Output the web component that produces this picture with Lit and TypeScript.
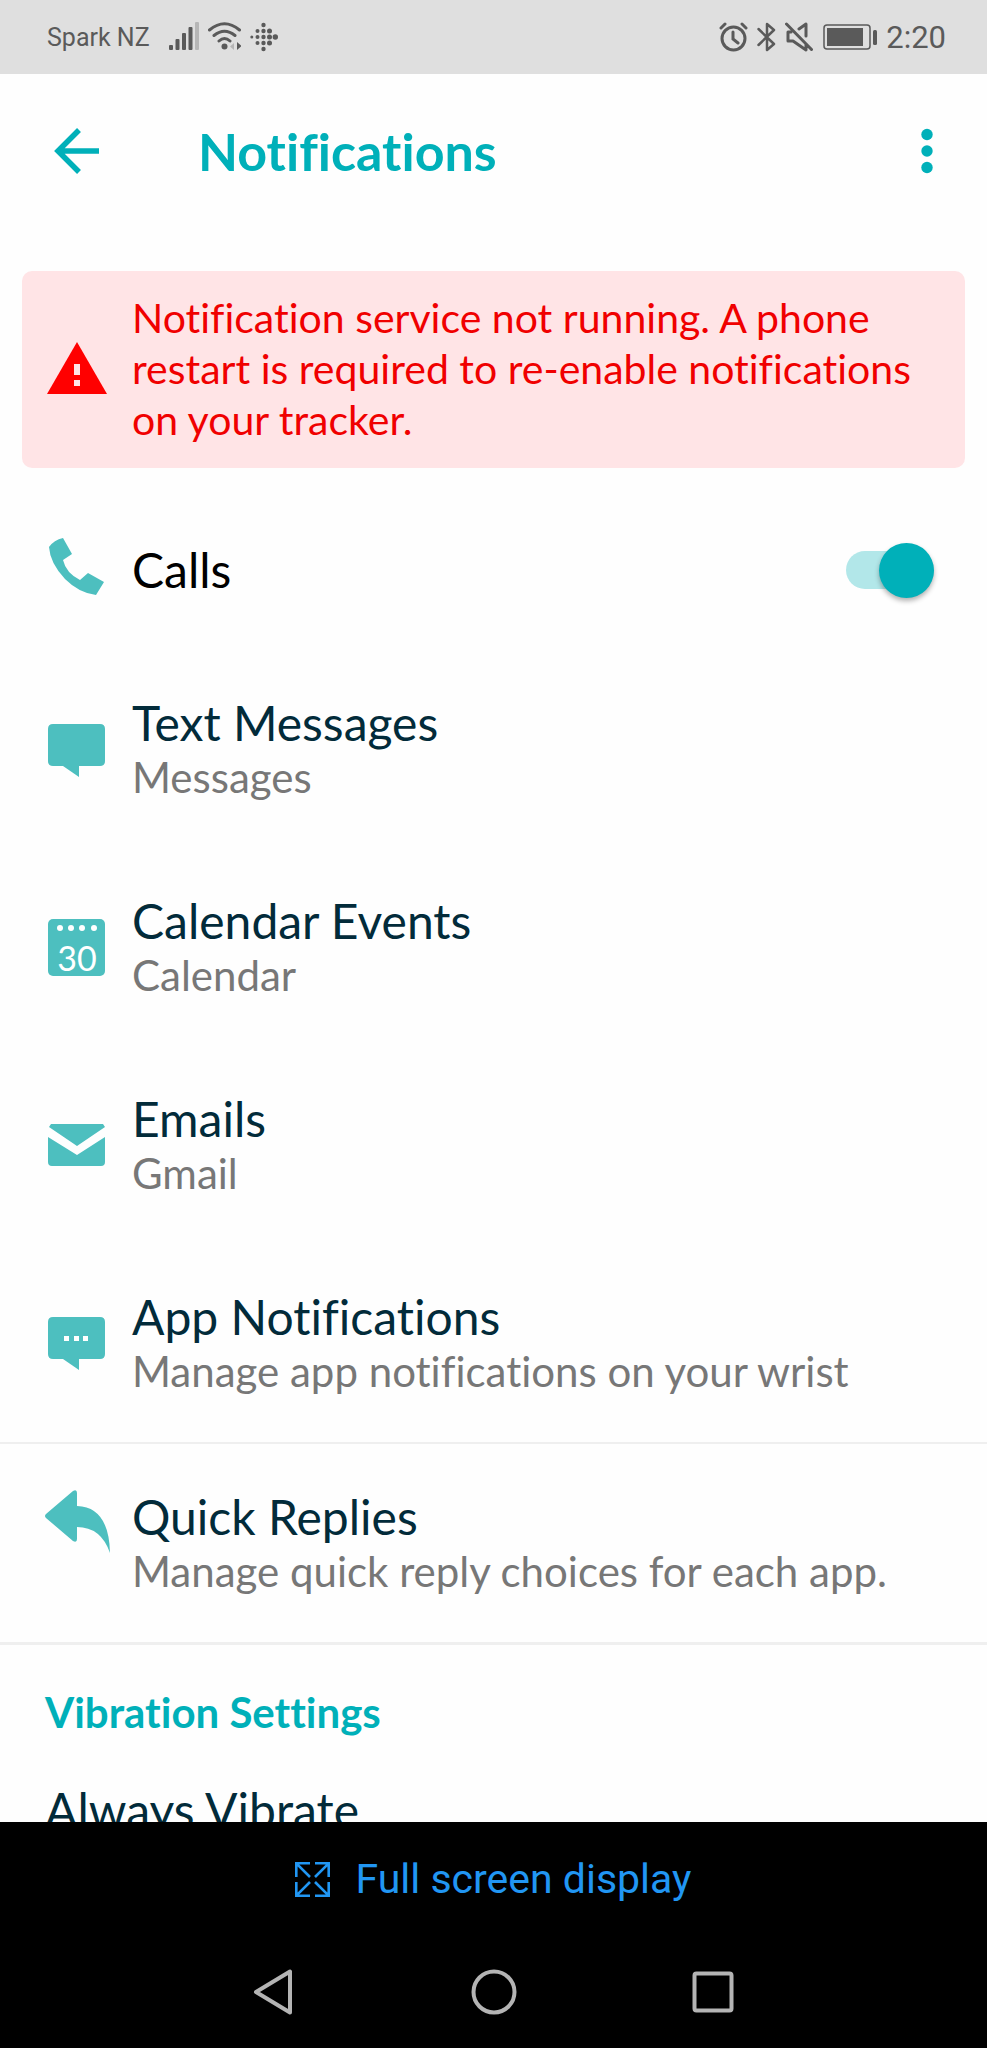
import { LitElement, html, css, svg } from "lit";
import { customElement, state } from "lit/decorators.js";

const icons = {
  phone: svg`<path d="M8 13Q13 6 22 4L31 20L22 26Q25 39 39 46L47 39L63 48L55 61Q38 59 24 45Q9 29 8 13Z" fill="#4dbfbf"/>`,
  message: svg`<path d="M12 11H59Q64 11 64 16V48Q64 53 59 53H38V64L22 53H12Q7 53 7 48V16Q7 11 12 11Z" fill="#4dbfbf"/>`,
  calendar: svg`<rect x="7" y="8" width="57" height="57" rx="5" fill="#4dbfbf"/>
    <g fill="#fff"><circle cx="19" cy="17" r="3"/><circle cx="30" cy="17" r="3"/><circle cx="41" cy="17" r="3"/><circle cx="53" cy="17" r="3"/></g>
    <text x="36" y="60" text-anchor="middle" font-family="Lato, sans-serif" font-size="34" fill="#fff">30</text>`,
  mail: svg`<path d="M10 15H62L64 18L36 37L8 18Z M7 28L36 46L64 28V53Q64 57 60 57H11Q7 57 7 53Z" fill="#4dbfbf"/>`,
  chat: svg`<path d="M12 10H59Q64 10 64 15V47Q64 52 59 52H38V63L22 52H12Q7 52 7 47V15Q7 10 12 10Z" fill="#4dbfbf"/>
    <path d="M23 29h5v5h-5zM33 29h5v5h-5zM42 29h5v5h-5z" fill="#fff"/>`,
  reply: svg`<path d="M5 27L32 4Q36 2 36 6V19Q68 20 69 66Q60 40 36 40V52Q36 56 32 54L5 31Q3 29 5 27Z" fill="#4dbfbf"/>`,
};

interface Item {
  title: string;
  detail: string;
  icon: keyof typeof icons;
}

const items: Item[] = [
  { title: "Text Messages", detail: "Messages", icon: "message" },
  { title: "Calendar Events", detail: "Calendar", icon: "calendar" },
  { title: "Emails", detail: "Gmail", icon: "mail" },
  { title: "App Notifications", detail: "Manage app notifications on your wrist", icon: "chat" },
];

@customElement("status-bar")
class StatusBar extends LitElement {
  static styles = css`
    :host {
      display: flex;
      align-items: center;
      justify-content: space-between;
      flex: none;
      height: 74px;
      padding: 0 41px 0 47px;
      background: #dfdfdf;
      color: #5a5a5a;
      font-family: Roboto, sans-serif;
    }
    .group { display: flex; align-items: center; gap: 9px; }
    .carrier { font-size: 25px; margin-right: 10px; }
    .time { font-size: 31px; }
    svg { display: block; }
  `;
  render() {
    return html`
      <div class="group">
        <span class="carrier">Spark NZ</span>
        <svg width="30" height="30" viewBox="0 0 30 30" fill="currentColor">
          <rect x="0" y="23" width="4" height="5" rx="1"/><rect x="6.500" y="17" width="4" height="11" rx="1"/>
          <rect x="13" y="11" width="4" height="17" rx="1"/><rect x="19.500" y="5" width="4" height="23" rx="1"/>
          <rect x="26" y="0" width="4" height="28" rx="1" opacity=".3"/>
        </svg>
        <svg width="33" height="30" viewBox="0 0 33 30" fill="none" stroke="currentColor" stroke-width="3" stroke-linecap="round">
          <path d="M1.500 8Q16.500-4.500 31.500 8M6 13.500Q16.500 5 27 13.500M11 19Q16.500 14 22 19"/>
          <circle cx="16.500" cy="24.500" r="3" fill="currentColor" stroke="none"/>
          <path d="M26 21V28L22 24.500Z" fill="currentColor" stroke="none" opacity=".3"/>
          <path d="M29 20V28L33.500 24Z" fill="currentColor" stroke="none"/>
        </svg>
        <svg width="28" height="30" viewBox="0 0 28 30" fill="currentColor">
          <circle cx="1.800" cy="15" r="1.500"/>
          <circle cx="7.500" cy="9" r="2"/><circle cx="7.500" cy="15" r="2"/><circle cx="7.500" cy="21" r="2"/>
          <circle cx="13.500" cy="3" r="2.200"/><circle cx="13.500" cy="9" r="2.200"/><circle cx="13.500" cy="15" r="2.200"/><circle cx="13.500" cy="21" r="2.200"/><circle cx="13.500" cy="27" r="2.200"/>
          <circle cx="19.500" cy="9" r="2.500"/><circle cx="19.500" cy="15" r="2.500"/><circle cx="19.500" cy="21" r="2.500"/>
          <circle cx="25.300" cy="15" r="2.700"/>
        </svg>
      </div>
      <div class="group">
        <svg width="29" height="30" viewBox="0 0 29 30" fill="none" stroke="currentColor" stroke-width="3" stroke-linecap="round">
          <circle cx="14.500" cy="16.500" r="11.500"/><path d="M14 10V17L19 21M2 6L6 2M23 2L27 6"/>
        </svg>
        <svg width="19" height="30" viewBox="0 0 19 30" fill="none" stroke="currentColor" stroke-width="2.500" stroke-linejoin="round" stroke-linecap="round">
          <path d="M1.500 7L17 22L10 28V2L17 8L1.500 23"/>
        </svg>
        <svg width="28" height="30" viewBox="0 0 28 30" fill="none" stroke="currentColor" stroke-width="3" stroke-linejoin="round" stroke-linecap="round">
          <path d="M1.500 2L26.500 27.500M6 10H3V19H8L21 28V22M14 7L21 2V14"/>
        </svg>
        <svg width="55" height="30" viewBox="0 0 55 30">
          <rect x="2" y="3" width="46" height="24" rx="3" fill="none" stroke="currentColor" stroke-width="1.500"/>
          <rect x="5" y="6" width="36" height="18" fill="currentColor"/>
          <rect x="51" y="8" width="4" height="15" rx="1.500" fill="currentColor"/>
        </svg>
        <span class="time">2:20</span>
      </div>`;
  }
}

@customElement("system-bar")
class SystemBar extends LitElement {
  static styles = css`
    :host { display: block; flex: none; background: #000; }
    button { border: 0; padding: 0; background: none; display: flex; align-items: center; cursor: pointer; }
    svg { display: block; }
    .full {
      margin: 0 auto;
      height: 114px;
      gap: 25px;
      color: #2196f3;
      font: 41px Roboto, sans-serif;
    }
    .nav { display: flex; justify-content: center; gap: 173px; height: 112px; }
  `;
  render() {
    return html`
      <button class="full">
        <svg width="35" height="35" viewBox="0 0 35 35" fill="none" stroke="currentColor" stroke-width="2.600">
          <path d="M15 1.300H1.300V15M1.300 1.300L15 15M20 1.300H33.700V15M33.700 1.300L20 15M15 33.700H1.300V20M1.300 33.700L15 20M20 33.700H33.700V20M33.700 33.700L20 20"/>
        </svg>
        Full screen display
      </button>
      <div class="nav">
        <button aria-label="Back">
          <svg width="46" height="46" viewBox="0 0 46 46" fill="none" stroke="#b4b4b4" stroke-width="4" stroke-linejoin="round"><path d="M4 23L38 2.500V43.500Z"/></svg>
        </button>
        <button aria-label="Home">
          <svg width="46" height="46" viewBox="0 0 46 46" fill="none" stroke="#b4b4b4" stroke-width="4"><circle cx="23" cy="23" r="20.500"/></svg>
        </button>
        <button aria-label="Recent apps">
          <svg width="46" height="46" viewBox="0 0 46 46" fill="none" stroke="#b4b4b4" stroke-width="4"><rect x="4.500" y="4.500" width="37" height="37" rx="2"/></svg>
        </button>
      </div>`;
  }
}

@customElement("app-root")
class AppRoot extends LitElement {
  @state() private calls = true;

  static styles = css`
    :host {
      display: flex;
      flex-direction: column;
      height: 100vh;
      background: #fefefe;
      color: #022b3a;
      font-family: Lato, sans-serif;
      font-variant-ligatures: none;
    }
    button { border: 0; padding: 0; background: none; cursor: pointer; }
    svg { display: block; flex: none; }
    h1, h2, p { margin: 0; }
    .bar { display: flex; align-items: center; flex: none; height: 154px; padding: 0 47px 0 54px; }
    .bar h1 { flex: 1; margin-left: 98px; color: #00b0b9; font-size: 52px; line-height: 60px; font-weight: 700; }
    .content { flex: 1; min-height: 0; overflow: hidden; }
    .alert {
      display: flex;
      align-items: center;
      gap: 19px;
      margin: 43px 22px 22px;
      padding: 21px 22px 23px 19px;
      border-radius: 10px;
      background: #ffe4e6;
      color: #f00000;
      font-size: 41px;
      line-height: 51px;
    }
    .row { display: flex; align-items: center; gap: 19px; padding: 0 53px 0 41px; text-decoration: none; }
    .calls { height: 160px; color: #000; }
    .calls label { flex: 1; }
    .name { font-size: 48px; line-height: 58px; color: #022b3a; }
    .calls .name { color: #000; }
    .text { padding: 44px 0 46px; }
    .detail { font-size: 42px; line-height: 50px; color: #777; }
    .replies { align-items: flex-start; border: solid #efefef; border-width: 2px 0 3px; }
    .replies svg { margin-top: 43px; }
    .switch {
      appearance: none;
      display: flex;
      align-items: center;
      justify-content: flex-end;
      width: 88px;
      height: 38px;
      margin: 0;
      border-radius: 19px;
      background: #b2e7e9;
      cursor: pointer;
    }
    .switch::before {
      content: "";
      flex: none;
      width: 55px;
      height: 55px;
      border-radius: 50%;
      background: #00b0b9;
      box-shadow: 0 3px 5px rgba(0, 0, 0, 0.3);
    }
    .switch:not(:checked) { justify-content: flex-start; background: #ccc; }
    .section { padding: 0 45px; }
    .section h2 { padding: 42px 0 44px; color: #00b0b9; font-size: 42px; line-height: 50px; font-weight: 700; }
  `;

  private row(item: Item, extra = "") {
    return html`
      <a class="row ${extra}" href="#">
        <svg width="72" height="72" viewBox="0 0 72 72">${icons[item.icon]}</svg>
        <div class="text">
          <div class="name">${item.title}</div>
          <div class="detail">${item.detail}</div>
        </div>
      </a>`;
  }

  render() {
    return html`
      <status-bar></status-bar>
      <header class="bar">
        <button aria-label="Back">
          <svg width="46" height="46" viewBox="0 0 46 46" fill="none" stroke="#00b0b9" stroke-width="5.500"><path d="M45 23H5M25 2L4 23L25 44"/></svg>
        </button>
        <h1>Notifications</h1>
        <button aria-label="More options">
          <svg width="26" height="46" viewBox="0 0 26 46" fill="#00b0b9"><circle cx="13" cy="6.500" r="5.700"/><circle cx="13" cy="23" r="5.700"/><circle cx="13" cy="39.500" r="5.700"/></svg>
        </button>
      </header>
      <main class="content">
        <div class="alert" role="alert">
          <svg width="72" height="72" viewBox="0 0 72 72"><path d="M36 9L66 61H6Z" fill="#f00"/><path d="M33 31h6v11h-6zM33 47h6v6h-6z" fill="#ffe4e6"/></svg>
          <p>Notification service not running. A phone restart is required to re-enable notifications on your tracker.</p>
        </div>
        <div class="row calls">
          <svg width="72" height="72" viewBox="0 0 72 72">${icons.phone}</svg>
          <label class="name" for="calls">Calls</label>
          <input class="switch" id="calls" type="checkbox" role="switch" .checked=${this.calls}
            @change=${(e: Event) => (this.calls = (e.target as HTMLInputElement).checked)} />
        </div>
        ${items.map((item) => this.row(item))}
        ${this.row({ title: "Quick Replies", detail: "Manage quick reply choices for each app.", icon: "reply" }, "replies")}
        <section class="section">
          <h2>Vibration Settings</h2>
          <div class="name">Always Vibrate</div>
        </section>
      </main>
      <system-bar></system-bar>`;
  }
}
